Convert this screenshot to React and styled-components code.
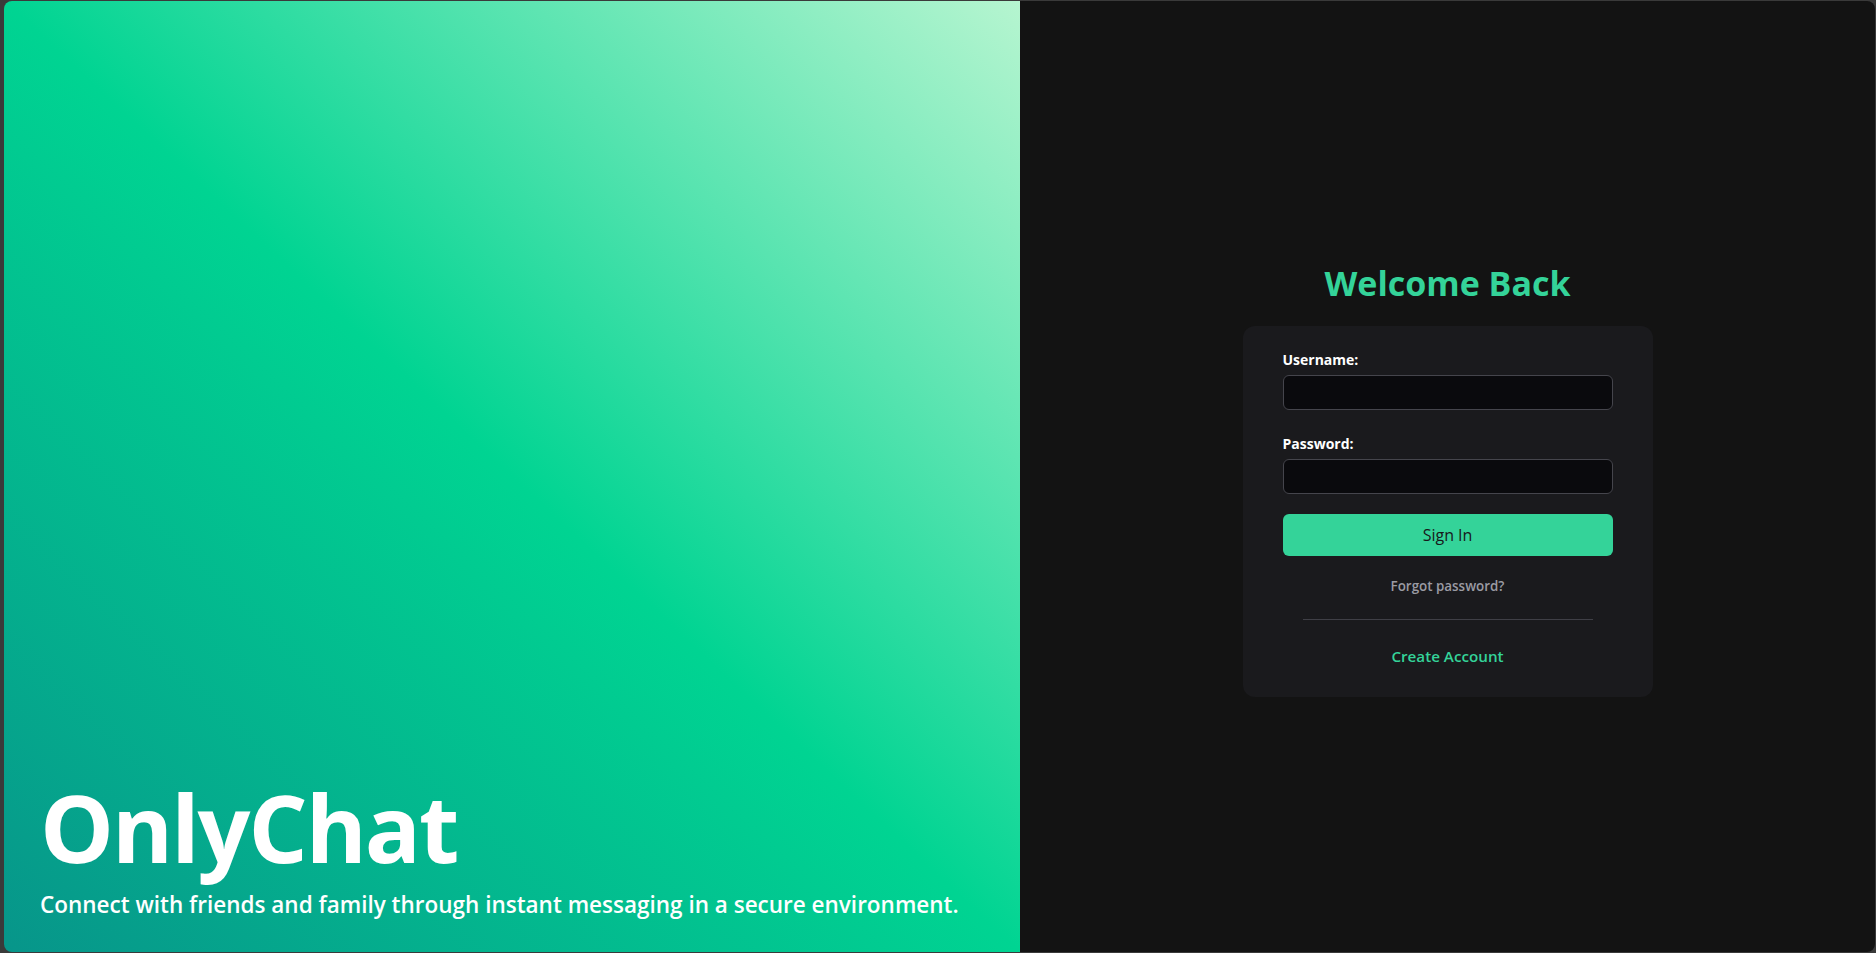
import React from "react";
import styled, { createGlobalStyle } from "styled-components";

const GlobalStyle = createGlobalStyle`
  html, body {
    margin: 0;
    padding: 0;
    height: 100%;
    background: #3a3a3a;
  }
  #root {
    height: 100%;
  }
  * {
    box-sizing: border-box;
  }
`;

const Frame = styled.div`
  height: 100vh;
  padding: 1px 1px 1px 4px;
  background: #3a3a3a;
  font-family: "Open Sans", "Noto Sans", sans-serif;
`;

const Window = styled.div`
  display: grid;
  grid-template-columns: 1016px 1fr;
  height: 100%;
  border-radius: 8px;
  overflow: hidden;
`;

const Hero = styled.section`
  display: flex;
  flex-direction: column;
  justify-content: flex-end;
  padding: 0 36px 31px;
  background: linear-gradient(to top right, #07958a 0%, #00d492 50%, #b6f5d0 100%);
  color: #fff;
`;

const Brand = styled.h1`
  margin: 0 0 15px;
  font-size: 93px;
  font-weight: 700;
  line-height: 1;
  letter-spacing: -2px;
`;

const Tagline = styled.p`
  margin: 0;
  font-size: 22.5px;
  font-weight: 600;
  line-height: 32px;
`;

const Side = styled.section`
  display: flex;
  flex-direction: column;
  align-items: center;
  justify-content: center;
  padding-top: 7px;
  background: #131313;
`;

const Heading = styled.h2`
  margin: 0 0 23px;
  font-size: 34px;
  font-weight: 700;
  line-height: 40px;
  color: #34d399;
`;

const Card = styled.form`
  width: 410px;
  padding: 24px 40px 31px;
  border-radius: 12px;
  background: #1a1a1d;
  display: flex;
  flex-direction: column;
`;

const Fields = styled.div`
  display: flex;
  flex-direction: column;
  gap: 24px;
`;

const Field = styled.div`
  display: flex;
  flex-direction: column;
  gap: 5px;
`;

const Label = styled.label`
  font-size: 14px;
  font-weight: 700;
  line-height: 20px;
  color: #fff;
`;

const Input = styled.input`
  height: 35px;
  border: 1px solid #45454c;
  border-radius: 6px;
  background: #0a0a0d;
  color: #fff;
  padding: 0 10px;
  font: inherit;
  outline: none;
`;

const Submit = styled.button`
  height: 42px;
  margin-top: 20px;
  border: none;
  border-radius: 6px;
  background: #34d399;
  color: #18181b;
  font-family: inherit;
  font-size: 16px;
  font-weight: 500;
  cursor: pointer;
`;

const Link = styled.a`
  align-self: center;
  text-decoration: none;
  cursor: pointer;
  font-size: ${({ $strong }) => ($strong ? "15.2px" : "13.4px")};
  font-weight: 600;
  color: ${({ $strong }) => ($strong ? "#34d399" : "#9b9ba3")};
  line-height: 20px;
`;

const ForgotRow = styled.div`
  display: flex;
  justify-content: center;
  margin-top: 20px;
`;

const Divider = styled.hr`
  width: 290px;
  align-self: center;
  margin: 23px 0 26px;
  border: none;
  border-top: 1px solid #3f3f46;
`;

const App = () => {
  return (
    <>
      <GlobalStyle />
      <Frame>
        <Window>
          <Hero>
            <Brand>OnlyChat</Brand>
            <Tagline>
              Connect with friends and family through instant messaging in a secure environment.
            </Tagline>
          </Hero>
          <Side>
            <Heading>Welcome Back</Heading>
            <Card onSubmit={(e) => e.preventDefault()}>
              <Fields>
                <Field>
                  <Label htmlFor="username">Username:</Label>
                  <Input id="username" type="text" />
                </Field>
                <Field>
                  <Label htmlFor="password">Password:</Label>
                  <Input id="password" type="password" />
                </Field>
              </Fields>
              <Submit type="submit">Sign In</Submit>
              <ForgotRow>
                <Link>Forgot password?</Link>
              </ForgotRow>
              <Divider />
              <Link $strong>Create Account</Link>
            </Card>
          </Side>
        </Window>
      </Frame>
    </>
  );
};

export default App;
